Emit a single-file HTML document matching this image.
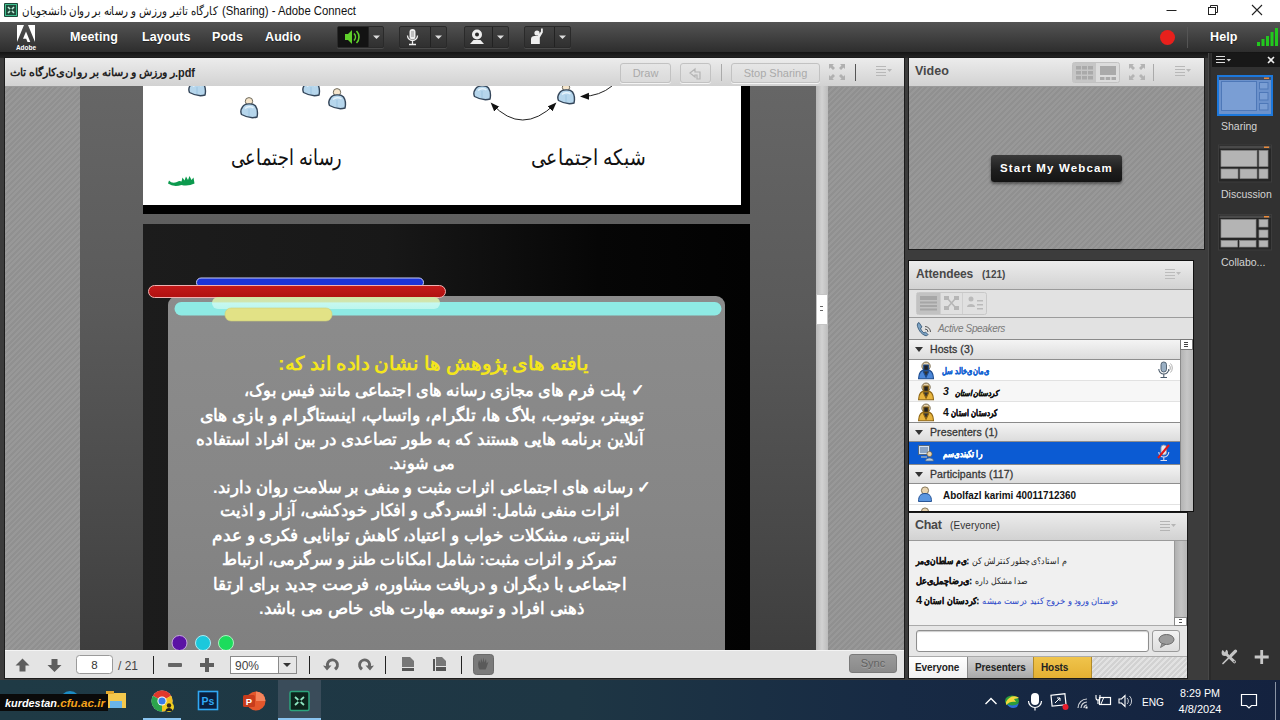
<!DOCTYPE html>
<html><head><meta charset="utf-8"><title>Adobe Connect</title>
<style>
*{box-sizing:border-box;margin:0;padding:0}
html,body{width:1280px;height:720px;overflow:hidden;background:#2f2f2f;font-family:"Liberation Sans",sans-serif;font-size:12px;color:#222}
.a{position:absolute}
.nw{white-space:nowrap;overflow:hidden}
.hatch{background:#949494 repeating-linear-gradient(135deg,#909090 0,#909090 2px,#989898 2px,#989898 4px)}
.phead{background:linear-gradient(#ececec,#d2d2d2);border-bottom:1px solid #9a9a9a}
/* title bar */
#title{left:0;top:0;width:1280px;height:22px;background:#fff}
/* menu bar */
#menu{left:0;top:22px;width:1280px;height:31px;background:linear-gradient(#545454,#404040 50%,#2c2c2c)}
#menu2{left:0;top:52px;width:1280px;height:6px;background:linear-gradient(#141414,#262626)}
.mi{color:#fff;font-weight:bold;font-size:12.500px;top:30px;letter-spacing:.1px;text-shadow:0 1px 1px #222}
.tb{top:26px;height:22px;background:linear-gradient(#424242,#303030);border:1px solid #2a2a2a;border-radius:2px;box-shadow:0 1px 0 #4a4a4a}
/* app bg */
#app{left:0;top:58px;width:1280px;height:622px;background:#3c3c3c}
/* taskbar */
#task{left:0;top:680px;width:1280px;height:40px;background:linear-gradient(90deg,#1f3a45 0,#1e3644 45%,#172a44 70%,#14223f 100%)}

.hb{top:63px;height:20px;border:1px solid #c2c2c2;border-radius:3px;background:linear-gradient(#e6e6e6,#dadada);color:#aaa;font-size:11px;line-height:18px;text-align:center;box-shadow:0 1px 0 #f4f4f4}

.gh{left:909px;width:271px;height:21px;background:linear-gradient(#f4f4f4,#dcdcdc);border-top:1px solid #8a8a8a;border-bottom:1px solid #8e8e8e;font-size:10.500px;color:#333;line-height:18px;padding-left:21px;letter-spacing:.1px;-webkit-text-stroke:.3px #3a3a3a}
.gh:before{content:"";position:absolute;left:6px;top:7px;border:4px solid transparent;border-top:5px solid #333;border-bottom:0}
.row{left:909px;width:271px;height:21px;background:#fff;border-bottom:1px solid #e2e2e2}
.rt{left:943px;height:20px;line-height:20px;font-size:10px;font-weight:bold;color:#111}

.ct{top:657px;height:21px;font-size:10px;font-weight:bold;color:#222;line-height:21px;letter-spacing:-.1px}
.sl{left:1221px;width:59px;color:#d4d4d4;font-size:10.500px;letter-spacing:0;white-space:nowrap}
</style></head><body>

<!-- TITLE BAR -->
<div id="title" class="a">
 <svg class="a" style="left:4px;top:3px" width="14" height="14" viewBox="0 0 14 14"><rect width="14" height="14" rx="1" fill="#1f4a3a"/><rect x="1.5" y="1.5" width="11" height="11" fill="none" stroke="#3fbf8f" stroke-width="1"/><path d="M4 4l6 6M10 4l-6 6" stroke="#bff0dc" stroke-width="1.6"/><circle cx="7" cy="7" r="1.6" fill="#1f4a3a"/></svg>
 <svg class="a" style="left:0;top:0" width="400" height="22" viewBox="0 0 400 22" font-family="Liberation Sans, sans-serif" fill="#111">
  <text x="218" y="15" direction="rtl" textLength="196" lengthAdjust="spacingAndGlyphs" font-size="11.500">کارگاه تاثیر ورزش و رسانه بر روان دانشجویان</text>
  <text x="222" y="15" textLength="134" lengthAdjust="spacingAndGlyphs" font-size="12">(Sharing) - Adobe Connect</text>
 </svg>
 <svg class="a" style="left:1160px;top:0" width="120" height="22" viewBox="0 0 120 22"><path d="M6.5 10.5h10" stroke="#222" stroke-width="1"/><rect x="48.5" y="7.5" width="7" height="7" fill="#fff" stroke="#222"/><path d="M50.5 7.5v-2h7v7h-2" fill="none" stroke="#222"/><path d="M92 5l10 10M102 5l-10 10" stroke="#222" stroke-width="1.1"/></svg>
</div>
<!-- MENU BAR -->
<div id="menu" class="a"></div><div id="menu2" class="a"></div>
<svg class="a" style="left:14px;top:24px" width="24" height="27" viewBox="0 0 24 27"><path d="M3 1h7L3 18zM21 1h-7l7 17zM12 7.5l4.3 10.5h-2.8l-1.3-3.3H9z" fill="#fff"/><text x="12" y="25.5" font-family="Liberation Sans,sans-serif" font-size="6.5" font-weight="bold" fill="#fff" text-anchor="middle">Adobe</text></svg>
<div class="a mi" style="left:70px">Meeting</div>
<div class="a mi" style="left:142px">Layouts</div>
<div class="a mi" style="left:212px">Pods</div>
<div class="a mi" style="left:265px">Audio</div>
<!-- toolbar buttons -->
<div class="a tb" style="left:337px;width:47px"></div><div class="a" style="left:338px;top:27px;width:30px;height:20px;background:#131313"></div>
<div class="a tb" style="left:399px;width:48px"></div>
<div class="a tb" style="left:464px;width:45px"></div>
<div class="a tb" style="left:524px;width:47px"></div>
<svg class="a" style="left:337px;top:26px" width="240" height="22" viewBox="0 0 240 22">
 <g stroke="#222" stroke-width="1"><path d="M31.500 1v20M93.500 1v20M155.500 1v20M217.500 1v20"/></g>
 <!-- speaker green -->
 <path d="M8 8h3l4-4v14l-4-4H8z" fill="#5fd02a"/><path d="M17 7.5a5 5 0 010 7M19.500 5a8.500 8.500 0 010 12" fill="none" stroke="#5fd02a" stroke-width="1.6"/>
 <path d="M36 9.500h7l-3.500 3.500z" fill="#ddd"/>
 <!-- mic -->
 <rect x="72.500" y="3" width="6" height="10.500" rx="3" fill="#eee"/><path d="M74 6h3M74 8h3M74 10h3" stroke="#777" stroke-width=".8"/><path d="M70.500 9.500a5 5 0 0010 0M75.500 15v3M72 18.500h7" fill="none" stroke="#eee" stroke-width="1.300"/>
 <path d="M98 9.500h7l-3.500 3.500z" fill="#ddd"/>
 <!-- webcam -->
 <circle cx="140" cy="8.500" r="5" fill="#eee"/><circle cx="140" cy="8.500" r="2" fill="#2a2a2a"/><path d="M133 18l3.500-4h7l3.500 4z" fill="#eee"/>
 <path d="M160 9.500h7l-3.500 3.500z" fill="#ddd"/>
 <!-- raise hand -->
 <circle cx="200" cy="7" r="2.600" fill="#eee"/><path d="M194 18v-5c0-2 1.500-3 3.500-3h3l3.500-4.500v-3h1.800v4l-3 5V18z" fill="#eee"/>
 <path d="M222 9.500h7l-3.500 3.500z" fill="#ddd"/>
</svg>
<!-- right side of menu -->
<div class="a" style="left:1160px;top:30px;width:15px;height:15px;border-radius:8px;background:#e8201c"></div>
<div class="a" style="left:1187px;top:27px;width:1px;height:21px;background:#555"></div>
<div class="a mi" style="left:1210px">Help</div>
<svg class="a" style="left:1256px;top:28px" width="22" height="18" viewBox="0 0 22 18"><path d="M1 14h3v4H1zM5.500 11h3v7h-3zM10 8h3v10h-3zM14.500 4h3v14h-3zM19 0h3v18h-3z" fill="#22c81e"/></svg>
<div id="app" class="a"></div>

<!-- SHARE POD -->
<div class="a" style="left:4px;top:57px;width:901px;height:622px;background:#1c1c1c"></div>
<div class="a hatch" style="left:5px;top:86px;width:899px;height:564px"></div>
<div class="a phead" style="left:5px;top:58px;width:899px;height:29px"></div>
<svg class="a" style="left:5px;top:58px" width="300" height="28" viewBox="5 58 300 28" font-family="Liberation Sans, sans-serif" font-weight="bold" fill="#222">
 <text x="175" y="76" direction="rtl" textLength="165" lengthAdjust="spacingAndGlyphs" font-size="10.500">ر ورزش و رسانه بر روان‌ی‌کارگاه تاث</text>
 <text x="175" y="76.500" textLength="20" lengthAdjust="spacingAndGlyphs" font-size="12">.pdf</text>
</svg>
<div class="a hb" style="left:620px;width:51px">Draw</div>
<div class="a hb" style="left:680px;width:31px"><svg width="16" height="14" viewBox="0 0 16 14" style="margin-top:3px"><path d="M2 6l5-4v3h5v7H9V8H7v2z" fill="none" stroke="#b4b4b4" stroke-width="1.2"/></svg></div>
<div class="a" style="left:721px;top:64px;width:1px;height:17px;background:#aaa"></div>
<div class="a hb" style="left:731px;width:89px">Stop Sharing</div>
<svg class="a" style="left:829px;top:64px" width="16" height="16" viewBox="0 0 16 16"><path d="M0 0h5L3.500 1.500 6 4 4 6 1.500 3.500 0 5zM16 0v5l-1.500-1.500L12 6l-2-2 2.500-2.500L11 0zM0 16v-5l1.500 1.500L4 10l2 2-2.500 2.500L5 16zM16 16h-5l1.500-1.500L10 12l2-2 2.500 2.500L16 11z" fill="#b0b0b0"/></svg>
<div class="a" style="left:855px;top:64px;width:1px;height:17px;background:#555"></div>
<svg class="a" style="left:876px;top:66px" width="16" height="10" viewBox="0 0 16 10"><path d="M0 .5h10M0 3.500h10M0 6.500h10M0 9.500h10" stroke="#b8b8b8"/><path d="M11 3h5l-2.500 3z" fill="#b8b8b8"/></svg>
<!-- doc area -->
<div class="a" style="left:80px;top:86px;width:736px;height:564px;background:linear-gradient(#666,#5a5a5a 40%,#484848 80%,#3e3e3e)"></div>
<div class="a" style="left:816px;top:86px;width:12px;height:564px;background:linear-gradient(90deg,#b8b8b8,#d2d2d2 50%,#bcbcbc)"></div>
<div class="a" style="left:816px;top:294px;width:12px;height:31px;background:#fff;border:1px solid #c4c4c4"></div>
<div class="a" style="left:820px;top:306px;width:3px;height:5px;border-top:1px solid #666;border-bottom:1px solid #666"></div>
<!-- slide 1 -->
<div class="a" style="left:143px;top:86px;width:607px;height:128px;background:#000"></div>
<div class="a" style="left:143px;top:86px;width:598px;height:119px;background:#fff"></div>
<!-- slide 2 -->
<div class="a" style="left:143px;top:224px;width:607px;height:426px;background:linear-gradient(90deg,#1c1c1c,#181818 40%,#060606 75%,#020202)"></div>
<div class="a" style="left:168px;top:296px;width:557px;height:354px;background:linear-gradient(#8c8c8c,#868686 60%,#808080);border-radius:9px 9px 0 0"></div>

<!-- SLIDE CONTENT -->
<svg class="a" style="left:0;top:86px" width="905" height="564" viewBox="0 86 905 564" font-family="Liberation Sans, sans-serif">
<defs>
 <g id="pp"><circle cx="9" cy="4.300" r="3.700" fill="#f6e6cc" stroke="#6e6a5c" stroke-width="1"/><path d="M2.500 10C4.500 6.300 13 5.700 15.500 9c2 3 2.400 7 1.500 11-5 1.500-11 0-15.500-2.500C.4 15 1 12 2.500 10z" fill="#b6d6ec" stroke="#34465a" stroke-width="1.400"/><path d="M5 11.500c2-2 6-2.500 8.500-.5" stroke="#e6f3fb" stroke-width="1.600" fill="none"/><path d="M9 12v7" stroke="#9cc4e0" stroke-width="1"/></g>
 <linearGradient id="pg" x1="0" y1="0" x2="0" y2="1"><stop offset="0" stop-color="#d2e2a4"/><stop offset=".4" stop-color="#d0e6b0"/><stop offset=".5" stop-color="#c6f8f0"/><stop offset="1" stop-color="#bcf6ee"/></linearGradient>
 <linearGradient id="rg" x1="0" y1="0" x2="0" y2="1"><stop offset="0" stop-color="#c41a1a"/><stop offset="1" stop-color="#b01010"/></linearGradient>
 <marker id="ah" markerWidth="10" markerHeight="8" refX="7" refY="3.500" orient="auto-start-reverse"><path d="M0 0l9 3.500-9 3.500z" fill="#111"/></marker>
</defs>
<!-- slide 1 -->
<use href="#pp" x="188" y="75"/><use href="#pp" x="240" y="97"/><use href="#pp" x="302" y="75"/><use href="#pp" x="328" y="88"/>
<use href="#pp" x="473" y="79"/><use href="#pp" x="557" y="83"/>
<path d="M492 104Q522 136 555 104" fill="none" stroke="#222" stroke-width="1" marker-start="url(#ah)" marker-end="url(#ah)"/>
<path d="M612 86Q600 96 582 96.500" fill="none" stroke="#222" stroke-width="1" marker-end="url(#ah)"/>
<g font-size="22" fill="#111">
<text x="342" y="165" direction="rtl" textLength="111" lengthAdjust="spacingAndGlyphs">رسانه اجتماعی</text>
<text x="645" y="165" direction="rtl" textLength="114" lengthAdjust="spacingAndGlyphs">شبکه اجتماعی</text>
</g>
<path d="M169 180.500q3 3.500 8 1.500 2.500-1.500 4.500-.5l1-4 2 3 1.500-4 2 3.500 1.500-4 2 4 2-2.500 1 6q-6 3-13 1.500-8 2.500-13.500-1.500z" fill="#0c9a4e"/>
<!-- slide 2 bars -->
<rect x="196.500" y="278" width="227" height="9" rx="4.500" fill="#1c34d8" stroke="#c8ccf4" stroke-width="1"/>
<rect x="148.500" y="285.500" width="297" height="12" rx="6" fill="url(#rg)" stroke="#f0b0b0" stroke-width="1"/>
<rect x="174.500" y="302" width="547" height="13.500" rx="6.700" fill="#8eeae4"/>
<rect x="212" y="297" width="228" height="12" rx="6" fill="url(#pg)"/>
<rect x="225" y="308" width="107" height="13" rx="6" fill="#e2e286" stroke="#d0d078" stroke-width=".6"/>
<!-- slide 2 text -->
<text x="588" y="370" direction="rtl" textLength="310" lengthAdjust="spacingAndGlyphs" font-size="19" font-weight="bold" fill="#f4e61c">یافته های پژوهش ها نشان داده اند که:</text>
<g font-size="17" font-weight="bold" fill="#fff">
<text x="644" y="396" direction="rtl" textLength="400" lengthAdjust="spacingAndGlyphs">✓  پلت فرم های مجازی رسانه های اجتماعی مانند فیس بوک،</text>
<text x="644" y="421" direction="rtl" textLength="444" lengthAdjust="spacingAndGlyphs">توییتر، یوتیوب، بلاگ ها، تلگرام، واتساپ، اینستاگرام و بازی های</text>
<text x="644" y="445" direction="rtl" textLength="448" lengthAdjust="spacingAndGlyphs">آنلاین برنامه هایی هستند که به طور تصاعدی در بین افراد استفاده</text>
<text x="455" y="469" direction="rtl" textLength="66" lengthAdjust="spacingAndGlyphs">می شوند.</text>
<text x="651" y="493" direction="rtl" textLength="438" lengthAdjust="spacingAndGlyphs">✓ رسانه های اجتماعی اثرات مثبت و منفی بر سلامت روان دارند.</text>
<text x="620" y="516" direction="rtl" textLength="400" lengthAdjust="spacingAndGlyphs">اثرات منفی شامل:  افسردگی و افکار خودکشی، آزار و اذیت</text>
<text x="630" y="541" direction="rtl" textLength="418" lengthAdjust="spacingAndGlyphs">اینترنتی، مشکلات خواب و اعتیاد، کاهش توانایی فکری و عدم</text>
<text x="617" y="565" direction="rtl" textLength="395" lengthAdjust="spacingAndGlyphs">تمرکز و اثرات مثبت: شامل امکانات طنز و سرگرمی، ارتباط</text>
<text x="627" y="590" direction="rtl" textLength="414" lengthAdjust="spacingAndGlyphs">اجتماعی با دیگران و دریافت مشاوره، فرصت جدید برای ارتقا</text>
<text x="585" y="614" direction="rtl" textLength="326" lengthAdjust="spacingAndGlyphs">ذهنی افراد و توسعه مهارت های خاص می باشد.</text>
</g>
<circle cx="179.500" cy="643" r="7.500" fill="#5a12a4" stroke="#c8a8e0" stroke-width="1"/>
<circle cx="203" cy="643" r="7.500" fill="#1cc8dc" stroke="#a8ecf4" stroke-width="1"/>
<circle cx="226" cy="643" r="7.500" fill="#1cdc5c" stroke="#a8f4c0" stroke-width="1"/>
</svg>
<!-- bottom toolbar -->
<div class="a" style="left:5px;top:650px;width:899px;height:28px;background:#e4e4e4;border-top:1px solid #f4f4f4"></div>

<!-- bottom toolbar items -->
<svg class="a" style="left:5px;top:651px" width="899" height="27" viewBox="5 651 899 27" font-family="Liberation Sans, sans-serif">
 <path d="M22.500 658.500l7 7h-4v6h-6v-6h-4z" fill="#5e5e5e"/>
 <path d="M54.500 672l7-7h-4v-6h-6v6h-4z" fill="#5e5e5e"/>
 <rect x="76.500" y="655.500" width="36" height="18" rx="3" fill="#fff" stroke="#9a9a9a"/>
 <text x="94.500" y="669" font-size="11.500" text-anchor="middle" fill="#333">8</text>
 <text x="118" y="669.500" font-size="12" fill="#444" textLength="20">/ 21</text>
 <path d="M153.500 656v18M309.500 656v18M385.500 656v18M461.500 656v18" stroke="#222" stroke-width="1"/>
 <rect x="168" y="663" width="14" height="4" rx="1" fill="#666"/>
 <path d="M200 663h5v-5h4v5h5v4h-5v5h-4v-5h-5z" fill="#5e5e5e"/>
 <rect x="230.500" y="656.500" width="66" height="17" fill="#fff" stroke="#8a8a8a"/>
 <rect x="278" y="657" width="18" height="16" fill="#e6e6e6"/><path d="M278.500 657v16" stroke="#8a8a8a"/>
 <path d="M283 663h8l-4 4z" fill="#333"/>
 <text x="235" y="670" font-size="12" fill="#444" textLength="24">90%</text>
 <!-- undo / redo -->
 <path d="M326 666a6.500 6.500 0 1110 4.500l-2-2.500a3.500 3.500 0 10-5-2.500h2.500l-4.500 5-4-5z" fill="#666"/>
 <path d="M371 666a6.500 6.500 0 10-10 4.500l2-2.500a3.500 3.500 0 115-2.500h-2.500l4.500 5 4-5z" fill="#666"/>
 <!-- page icons -->
 <path d="M402 657h8l4 4v6h-12z" fill="#777"/><rect x="402" y="668" width="12" height="3" fill="#555"/>
 <path d="M436 657h6l4 4v5h-10z" fill="#777"/><path d="M433 659h2v12h-2zM436 667h10v4h-10z" fill="#555"/>
 <rect x="473.500" y="654.500" width="20" height="20" rx="3" fill="#7a7a7a" stroke="#6a6a6a"/>
 <path d="M478 664l1-4 1.500 3 .5-5 1.500 4.500 1-5 1 5 1.500-4 .5 5 2-2-2 6-1 2h-6l-1-2z" fill="#5a5a5a"/>
</svg>
<div class="a" style="left:849px;top:654px;width:48px;height:19px;background:linear-gradient(#9a9a9a,#8a8a8a);border:1px solid #7a7a7a;border-radius:3px;color:#626262;font-size:11px;line-height:17px;text-align:center;text-shadow:0 1px 0 #a4a4a4">Sync</div>

<!-- VIDEO POD -->
<div class="a" style="left:908px;top:57px;width:297px;height:193px;background:#1c1c1c"></div>
<div class="a hatch" style="left:909px;top:86px;width:295px;height:163px"></div>
<div class="a phead" style="left:909px;top:58px;width:295px;height:29px"></div>
<div id="t_vid" class="a" style="left:915px;top:64px;font-size:12.500px;font-weight:bold;color:#484848;letter-spacing:0">Video</div>
<svg class="a" style="left:1072px;top:62px" width="125" height="22" viewBox="1072 62 125 22">
 <rect x="1072.500" y="62.500" width="47" height="20" rx="2" fill="#dcdcdc" stroke="#c2c2c2"/>
 <rect x="1073" y="63" width="23" height="19" fill="#c6c6c6"/>
 <g fill="#aaa"><rect x="1076" y="66" width="5" height="3.500"/><rect x="1082" y="66" width="5" height="3.500"/><rect x="1088" y="66" width="5" height="3.500"/><rect x="1076" y="71" width="5" height="3.500"/><rect x="1082" y="71" width="5" height="3.500"/><rect x="1088" y="71" width="5" height="3.500"/><rect x="1076" y="76" width="5" height="3.500"/><rect x="1082" y="76" width="5" height="3.500"/><rect x="1088" y="76" width="5" height="3.500"/>
 <rect x="1100" y="66" width="16" height="9"/><rect x="1100" y="77" width="4.500" height="3"/><rect x="1105.700" y="77" width="4.500" height="3"/><rect x="1111.500" y="77" width="4.500" height="3"/></g>
 <g transform="translate(1129,64)"><path d="M0 0h5L3.500 1.500 6 4 4 6 1.500 3.500 0 5zM16 0v5l-1.500-1.500L12 6l-2-2 2.500-2.500L11 0zM0 16v-5l1.500 1.500L4 10l2 2-2.500 2.500L5 16zM16 16h-5l1.500-1.500L10 12l2-2 2.500 2.500L16 11z" fill="#b4b4b4"/></g>
 <path d="M1153.500 64v17" stroke="#aaa"/>
 <g transform="translate(1175,66)"><path d="M0 .5h10M0 3.500h10M0 6.500h10M0 9.500h10" stroke="#b8b8b8"/><path d="M11 3h5l-2.500 3z" fill="#b8b8b8"/></g>
</svg>
<div class="a" style="left:991px;top:155px;width:131px;height:27px;border-radius:3px;background:linear-gradient(#3a3a3a,#1e1e1e 55%,#141414);box-shadow:0 2px 3px rgba(0,0,0,.45);color:#fff;font-size:11.500px;font-weight:bold;line-height:26px;text-align:center;letter-spacing:1.150px">Start My Webcam</div>

<!-- ATTENDEES POD -->
<div class="a" style="left:908px;top:260px;width:286px;height:252px;background:#111"></div>
<div class="a phead" style="left:909px;top:261px;width:284px;height:29px"></div>
<div id="t_att" class="a" style="left:916px;top:267px;font-size:12px;font-weight:bold;color:#484848;letter-spacing:-.1px">Attendees</div>
<div id="t_121" class="a" style="left:982px;top:269px;font-size:10px;font-weight:bold;color:#484848">(121)</div>
<svg class="a" style="left:1165px;top:269px" width="16" height="10" viewBox="0 0 16 10"><path d="M0 .5h10M0 3.500h10M0 6.500h10M0 9.500h10" stroke="#bcbcbc"/><path d="M11 3h5l-2.500 3z" fill="#bcbcbc"/></svg>
<div class="a" style="left:909px;top:290px;width:284px;height:28px;background:#e2e2e2;border-bottom:1px solid #9c9c9c"></div>
<svg class="a" style="left:916px;top:292px" width="72" height="23" viewBox="916 292 72 23">
 <rect x="916.500" y="292.500" width="70" height="22" rx="2" fill="#e0e0e0" stroke="#c8c8c8"/>
 <rect x="917" y="293" width="23" height="21" fill="#c2c2c2"/><path d="M940.500 293v21M962.500 293v21" stroke="#cfcfcf"/>
 <g fill="#a6a6a6"><rect x="920" y="296" width="17" height="4"/><rect x="920" y="301.500" width="17" height="2"/><rect x="920" y="305" width="17" height="2"/><rect x="920" y="308.500" width="17" height="2"/></g>
 <g fill="#b6b6b6"><rect x="944" y="296" width="5" height="4"/><rect x="954" y="296" width="5" height="4"/><rect x="944" y="306" width="5" height="4"/><rect x="954" y="306" width="5" height="4"/><path d="M948 299l7 8M955 299l-7 8" stroke="#b6b6b6" stroke-width="1.500"/></g>
 <g fill="#bababa"><circle cx="971" cy="299" r="2.500"/><path d="M967 307c0-4 8-4 8 0z"/><rect x="977" y="300" width="6" height="1.500"/><rect x="977" y="304" width="6" height="1.500"/><rect x="977" y="308" width="6" height="1.500"/></g>
</svg>
<div class="a" style="left:909px;top:318px;width:284px;height:21px;background:#e2e2e2"></div>
<svg class="a" style="left:916px;top:321px" width="17" height="16" viewBox="0 0 17 16"><path d="M3 1.500c-1.500.5-2 2-1.500 4C3 10 5.500 13 9 14.500c1.500.5 2.500 0 3-1l-2.500-2.500-1.500 1C6.500 11 5 9 4.500 7l1.500-1z" fill="#7aa2c4" stroke="#3a5a78" stroke-width=".9"/><path d="M9 8a3 3 0 013 3M9 5.500a5.500 5.500 0 015.500 5.500" fill="none" stroke="#555" stroke-width="1"/></svg>
<div id="t_as" class="a" style="left:938px;top:323px;font-size:10px;font-style:italic;color:#7a7a7a;letter-spacing:-.35px">Active Speakers</div>
<div class="a gh" style="top:339px">Hosts (3)</div>
<div class="a row" style="top:360px"></div>
<div class="a row" style="top:381px;background:#f7f7f7"></div>
<div class="a row" style="top:402px;height:20px;border-bottom:0"></div>
<div class="a gh" style="top:422px;height:20px">Presenters (1)</div>
<div class="a row" style="top:442px;height:22px;background:#0b5bd3;border-bottom:0"></div>
<div class="a gh" style="top:464px;height:20px">Participants (117)</div>
<div class="a row" style="top:484px"></div>
<div class="a row" style="top:505px;height:6px;border-bottom:0"></div>
<svg class="a" style="left:909px;top:360px" width="271px" height="151" viewBox="909 360 271 151" font-family="Liberation Sans, sans-serif" font-weight="bold">
 <defs>
  <g id="av"><circle cx="7" cy="4.500" r="3.600" fill="#e8d4b0" stroke="#6a5a3a" stroke-width=".8"/><path d="M.5 15.500C.5 10 2.500 7.500 7 7.500s6.500 2.500 6.500 8z" stroke-width=".9"/><path d="M5 3.500h4v4.500H5z" fill="#222"/><path d="M4.500 9l2.500 5 2.500-5" fill="#333"/></g>
 </defs>
 <use href="#av" transform="translate(918,361) scale(1.15)" fill="#4a86d8" stroke="#1c4a8c"/>
 <use href="#av" transform="translate(918,382) scale(1.15)" fill="#e8b43c" stroke="#8c6414"/>
 <use href="#av" transform="translate(918,403) scale(1.15)" fill="#e8b43c" stroke="#8c6414"/>
 <text x="989" y="374" direction="rtl" textLength="47" lengthAdjust="spacingAndGlyphs" font-size="8.500" fill="#1464d2" stroke="#1464d2" stroke-width=".4">ی‌مان‌ی‌خالد سل</text>
 <text x="943" y="395" font-size="10.500" font-style="italic" fill="#111">3</text>
 <text x="998" y="396" direction="rtl" textLength="43" lengthAdjust="spacingAndGlyphs" font-size="8" font-style="italic" fill="#111" stroke="#111" stroke-width=".35">کردستان استان</text>
 <text x="943" y="416" font-size="10.500" fill="#111">4</text>
 <text x="997" y="416" direction="rtl" textLength="46" lengthAdjust="spacingAndGlyphs" font-size="8.500" fill="#111" stroke="#111" stroke-width=".4">کردستان استان</text>
 <!-- speaking mic -->
 <g transform="translate(1158,362)"><rect x="3" y="0" width="5.500" height="10" rx="2.700" fill="#9ab0c4" stroke="#4a5a6a" stroke-width=".9"/><path d="M.8 7a5 5 0 0010 0M5.800 12v3M2.500 15.500h6.500" fill="none" stroke="#4a5a6a" stroke-width="1.100"/><path d="M11 3a4 4 0 010 6M12.500 1.500a6.500 6.500 0 010 9" fill="none" stroke="#9a9a9a" stroke-width=".8"/></g>
 <!-- presenter row -->
 <g transform="translate(918,445)"><rect x=".5" y=".5" width="11" height="9" fill="#d8e4f0" stroke="#56687c"/><rect x="2" y="2" width="8" height="6" fill="#8aa4c4"/><path d="M3 12h6" stroke="#9ab" stroke-width="1.500"/><circle cx="11.500" cy="9" r="2.600" fill="#e8d4b0" stroke="#6a5a3a" stroke-width=".7"/><path d="M7.500 16c0-4 8-4 8 0z" fill="#b8cce0" stroke="#56687c" stroke-width=".7"/></g>
 <text x="982" y="456.500" direction="rtl" textLength="39" lengthAdjust="spacingAndGlyphs" font-size="8.500" fill="#fff" stroke="#fff" stroke-width=".4">را تکبندی‌سم</text>
 <g transform="translate(1158,445)"><rect x="3" y="0" width="5.500" height="10" rx="2.700" fill="#e8e8f0" stroke="#8a94a8" stroke-width=".9"/><path d="M.8 7a5 5 0 0010 0M5.800 12v3M2.500 15.500h6.500" fill="none" stroke="#dde" stroke-width="1.100"/><path d="M0 13L11 0" stroke="#e01818" stroke-width="2"/></g>
 <!-- participant -->
 <g transform="translate(918,486)"><circle cx="7" cy="4.500" r="3.600" fill="#e8d4b0" stroke="#6a5a3a" stroke-width=".8"/><path d="M.5 15.500C.5 10 2.500 7.500 7 7.500s6.500 2.500 6.500 8z" fill="#5a96e0" stroke="#1c4a8c" stroke-width=".9"/></g>
 <text x="943" y="498.500" font-size="10.500" fill="#111" textLength="133" lengthAdjust="spacingAndGlyphs">Abolfazl karimi 40011712360</text>
 <g transform="translate(918,507)"><circle cx="7" cy="4.500" r="3.600" fill="#e8d4b0" stroke="#6a5a3a" stroke-width=".8"/></g>
</svg>
<div class="a" style="left:1180px;top:339px;width:13px;height:172px;background:linear-gradient(90deg,#b4b4b4,#c6c6c6 50%,#b8b8b8);border-left:1px solid #8a8a8a"></div>
<div class="a" style="left:1180px;top:339px;width:13px;height:11px;background:#fff;border:1px solid #777"></div>
<div class="a" style="left:1184px;top:342px;width:4px;height:5px;border-top:1px solid #444;border-bottom:1px solid #444"></div>
<div class="a" style="left:1184px;top:344px;width:4px;height:1px;background:#444"></div>

<!-- CHAT POD -->
<div class="a" style="left:908px;top:512px;width:280px;height:167px;background:#1a1a1a"></div>
<div class="a" style="left:909px;top:513px;width:278px;height:165px;background:#e6e6e6"></div>
<div class="a phead" style="left:909px;top:513px;width:278px;height:28px"></div>
<div id="t_chat" class="a" style="left:915px;top:518px;font-size:12.500px;font-weight:bold;color:#484848;letter-spacing:-.3px">Chat</div>
<div id="t_ev" class="a" style="left:950px;top:520px;font-size:10px;color:#333;letter-spacing:.1px">(Everyone)</div>
<svg class="a" style="left:1160px;top:521px" width="16" height="10" viewBox="0 0 16 10"><path d="M0 .5h10M0 3.500h10M0 6.500h10M0 9.500h10" stroke="#b4b4b4"/><path d="M11 3h5l-2.500 3z" fill="#b4b4b4"/></svg>
<div class="a" style="left:909px;top:541px;width:265px;height:85px;background:#f0f0f0;border-bottom:1px solid #aaa"></div>
<div class="a" style="left:1174px;top:541px;width:13px;height:85px;background:linear-gradient(90deg,#b0b0b0,#c4c4c4 50%,#b6b6b6);border-left:1px solid #999"></div>
<div class="a" style="left:1174px;top:617px;width:13px;height:9px;background:#fff;border:1px solid #888"></div>
<div class="a" style="left:1179px;top:619px;width:3px;height:4px;border-top:1px solid #555;border-bottom:1px solid #555"></div>
<svg class="a" style="left:909px;top:541px" width="265" height="85" viewBox="909 541 265 85" font-family="Liberation Sans, sans-serif" font-size="9">
 <text x="969" y="563.500" direction="rtl" textLength="53" lengthAdjust="spacingAndGlyphs" font-weight="bold" fill="#111" stroke="#111" stroke-width=".3">:ی‌م سلطان‌ی‌مر</text>
 <text x="1067" y="563.500" direction="rtl" textLength="95" lengthAdjust="spacingAndGlyphs" fill="#222">م استاد؟ی‌چطور کنترلش کن</text>
 <text x="972" y="583.500" direction="rtl" textLength="56" lengthAdjust="spacingAndGlyphs" font-weight="bold" fill="#111" stroke="#111" stroke-width=".3">:ی‌رضاچمل‌ی‌عل</text>
 <text x="1028" y="583.500" direction="rtl" textLength="53" lengthAdjust="spacingAndGlyphs" fill="#222">صدا مشکل داره</text>
 <text x="916" y="604" font-weight="bold" font-size="11" fill="#111">4</text>
 <text x="979" y="604" direction="rtl" textLength="55" lengthAdjust="spacingAndGlyphs" font-weight="bold" fill="#111" stroke="#111" stroke-width=".3">:کردستان استان</text>
 <text x="1118" y="604" direction="rtl" textLength="136" lengthAdjust="spacingAndGlyphs" fill="#2a46c8">دوستان ورود و خروج کنید درست میشه</text>
</svg>
<div class="a" style="left:916px;top:630px;width:233px;height:22px;background:#fff;border:1px solid #8e8e8e;border-radius:3px;box-shadow:inset 0 1px 1px #ccc"></div>
<div class="a" style="left:1152px;top:630px;width:28px;height:22px;background:linear-gradient(#f2f2f2,#dedede);border:1px solid #9a9a9a;border-radius:3px"></div>
<svg class="a" style="left:1158px;top:634px" width="17" height="14" viewBox="0 0 17 14"><ellipse cx="8.500" cy="5.500" rx="7.500" ry="5" fill="#9c9c9c" stroke="#6a6a6a"/><path d="M4 9.500l-1.500 4 5-3z" fill="#9c9c9c" stroke="#6a6a6a" stroke-width=".8"/></svg>
<div class="a" style="left:909px;top:656px;width:278px;height:22px;border-top:1px solid #aaa;background:#d8d8d8 repeating-linear-gradient(135deg,#d2d2d2 0,#d2d2d2 2px,#e2e2e2 2px,#e2e2e2 4px)"></div>
<div class="a ct" style="left:909px;width:58px;background:linear-gradient(#fff,#f0f0f0);padding-left:6px">Everyone</div>
<div class="a ct" style="left:967px;width:66px;background:linear-gradient(#d4d4d4,#a8a8a8);padding-left:7px;border-left:1px solid #888">Presenters</div>
<div class="a ct" style="left:1033px;width:59px;background:linear-gradient(#f0c44c,#e4b032);padding-left:7px;border-left:1px solid #b08a2a;border-right:1px solid #b08a2a">Hosts</div>

<!-- RIGHT SIDEBAR -->
<div class="a" style="left:1209px;top:53px;width:71px;height:627px;background:#313131;border-left:2px solid #2a2a2a;box-shadow:-1px 0 0 #474747"></div>
<div class="a" style="left:1212px;top:53px;width:68px;height:14px;background:#181818"></div>
<svg class="a" style="left:1216px;top:56px" width="16" height="9" viewBox="0 0 16 9"><path d="M0 .5h9M0 3.500h9M0 6.500h9" stroke="#ddd"/><path d="M10.500 3h4.500l-2.200 2.500z" fill="#ddd"/></svg>
<svg class="a" style="left:1267px;top:56px" width="8" height="8" viewBox="0 0 8 8"><path d="M1 1l6 6M7 1L1 7" stroke="#eee" stroke-width="1.600"/></svg>
<svg class="a" style="left:1214px;top:72px" width="62" height="205" viewBox="1214 72 62 205">
 <rect x="1218" y="76" width="54" height="39" fill="#6c92cc" stroke="#1c78dc" stroke-width="2"/>
 <rect x="1219" y="77" width="52" height="3" fill="#3c4c68"/><rect x="1264" y="77.500" width="5" height="1.500" fill="#e88a3c"/>
 <rect x="1221.500" y="81.500" width="35" height="29" fill="#7a9ed4" stroke="#4e78b8"/>
 <g fill="#7a9ed4" stroke="#4e78b8"><rect x="1259.500" y="82.500" width="8.500" height="6.500"/><rect x="1259.500" y="92.500" width="8.500" height="7.500"/><rect x="1259.500" y="103.500" width="8.500" height="6.500"/></g>
 <rect x="1218.500" y="145" width="53" height="37" fill="#262626" stroke="#3c3c3c" stroke-width="1"/>
 <rect x="1219.500" y="146" width="51" height="2.500" fill="#4a4a4a"/><rect x="1264" y="146.500" width="5" height="1.500" fill="#e88a3c"/>
 <g fill="#b4b4b4" stroke="#8a8a8a" stroke-width=".7"><rect x="1221" y="150.500" width="36" height="16"/><rect x="1259" y="150.500" width="9" height="16"/><rect x="1221" y="169" width="17" height="9.500"/><rect x="1240" y="169" width="17" height="9.500"/><rect x="1259" y="169" width="9" height="9.500"/></g>
 <rect x="1218.500" y="214.500" width="53" height="35.500" fill="#262626" stroke="#3c3c3c" stroke-width="1"/>
 <rect x="1219.500" y="215.500" width="51" height="2.500" fill="#4a4a4a"/><rect x="1264" y="216" width="5" height="1.500" fill="#e88a3c"/>
 <g fill="#b4b4b4" stroke="#8a8a8a" stroke-width=".7"><rect x="1221" y="219.500" width="35" height="18"/><rect x="1259" y="219.500" width="9" height="7.500"/><rect x="1259" y="230" width="9" height="7.500"/><rect x="1221" y="240.500" width="16.500" height="6.500"/><rect x="1239.500" y="240.500" width="16.500" height="6.500"/><rect x="1259" y="240.500" width="9" height="6.500"/></g>
</svg>
<div class="a sl" style="top:120px">Sharing</div>
<div class="a sl" style="top:188px">Discussion</div>
<div class="a sl" style="top:256px">Collabo...</div>
<svg class="a" style="left:1220px;top:647px" width="52" height="20" viewBox="0 0 52 20"><path d="M15.500 4.200L11 8.700" stroke="#c4c4c4" stroke-width="3.300" stroke-linecap="round"/><path d="M11 8.700L3 16.500" stroke="#c4c4c4" stroke-width="1.700" stroke-linecap="round"/><path d="M5 6L14.500 14.800" stroke="#c4c4c4" stroke-width="3" stroke-linecap="round"/><circle cx="4.800" cy="5.800" r="3.200" fill="#c4c4c4"/><path d="M1 1l4 4.500L6.500 2z" fill="#313131"/><circle cx="14.300" cy="14.600" r=".9" fill="#555"/><path d="M34.700 10h14M41.700 3v14" stroke="#c8c8c8" stroke-width="2.800"/></svg>
<div id="task" class="a"></div>
<!-- TASKBAR ITEMS -->
<div class="a" style="left:278px;top:680px;width:43px;height:40px;background:#3a4c5a"></div>
<div class="a" style="left:278px;top:718px;width:43px;height:2px;background:#8ac4f0"></div>
<div class="a" style="left:143px;top:718px;width:38px;height:2px;background:#8ac4f0"></div>
<svg class="a" style="left:0;top:680px" width="1280" height="40" viewBox="0 680 1280 40" font-family="Liberation Sans, sans-serif">
 <!-- edge icon behind watermark -->
 <circle cx="70" cy="701" r="10" fill="#1c8cc4"/>
 <!-- file explorer -->
 <rect x="106" y="693" width="20" height="15" fill="#f4c84c"/><rect x="106" y="691" width="8" height="3" fill="#e4a82c"/><rect x="110" y="701" width="12" height="7" fill="#6ab4e8"/>
 <!-- watermark -->
 <rect x="0" y="694" width="108" height="17" fill="#0a0a0a"/>
 <text x="5" y="707" font-size="11.500" font-weight="bold" font-style="italic" fill="#fff" textLength="52" lengthAdjust="spacingAndGlyphs">kurdestan</text>
 <text x="57" y="707" font-size="11.500" font-weight="bold" font-style="italic" fill="#f4a41c" textLength="48" lengthAdjust="spacingAndGlyphs">.cfu.ac.ir</text>
 <!-- chrome -->
 <circle cx="162" cy="701" r="10.500" fill="#e8e8e8"/>
 <path d="M162 701L152.900 695.750A10.500 10.500 0 01171.100 695.750z" fill="#e0382c"/>
 <path d="M162 701L171.100 695.750A10.500 10.500 0 01162 711.500z" fill="#f4c020"/>
 <path d="M162 701L162 711.500A10.500 10.500 0 01152.900 695.750z" fill="#2ca44c"/>
 <circle cx="162" cy="701" r="4.600" fill="#fff"/><circle cx="162" cy="701" r="3.600" fill="#3a7ce8"/>
 <circle cx="169" cy="707" r="5" fill="#f0d020"/><circle cx="169" cy="705.500" r="2.200" fill="#3a2a1a"/><path d="M165.500 711c0-4 7-4 7 0z" fill="#222"/>
 <!-- PS -->
 <rect x="198.500" y="691.500" width="19" height="18" fill="#0a1e3c" stroke="#30a8f4" stroke-width="1.600"/>
 <text x="208" y="705" font-size="10.500" font-weight="bold" fill="#30a8f4" text-anchor="middle">Ps</text>
 <!-- PowerPoint -->
 <circle cx="256" cy="701" r="9.500" fill="#e4572c"/><path d="M256 691.500a9.500 9.500 0 019.500 9.500H256z" fill="#f4845c"/>
 <rect x="243" y="695" width="12" height="12" rx="1.500" fill="#c83c1c"/>
 <text x="249" y="705" font-size="9.500" font-weight="bold" fill="#fff" text-anchor="middle">P</text>
 <!-- connect -->
 <rect x="290" y="691.500" width="19" height="19" rx="1.500" fill="#0c241c" stroke="#2ca47c" stroke-width="1.500"/>
 <path d="M295 697l9 8M304 697l-9 8" stroke="#8ce4c0" stroke-width="1.800"/><circle cx="299.500" cy="701" r="1.700" fill="#0c241c"/>
 <!-- tray -->
 <path d="M985.500 704l5.500-5.500 5.500 5.500" fill="none" stroke="#fff" stroke-width="1.400"/>
 <ellipse cx="1012" cy="701" rx="7" ry="5.500" fill="#2c9c3c"/><path d="M1006 702c3-6 9-7 13-4l-5 1 2 3c-4-1-7 0-10 3z" fill="#f4d83c"/><path d="M1007 704c3 2 9 2 12-1l-2 4c-4 2-8 1-10-3z" fill="#2c6cd8"/>
 <rect x="1031" y="693" width="8" height="12" rx="4" fill="#fff"/><path d="M1028.500 701a6.500 6.500 0 0013 0M1035 707.500v3" fill="none" stroke="#fff" stroke-width="1.200"/>
 <rect x="1051.500" y="694.500" width="14" height="11" fill="none" stroke="#fff" stroke-width="1.200" transform="rotate(-6 1058 700)"/><path d="M1055 703l5-5M1057 698h3v3" stroke="#fff" fill="none" stroke-width="1"/><circle cx="1065.500" cy="707" r="3" fill="#e81c2c"/>
 <path d="M1078 708a9 9 0 019-9M1081 708a6 6 0 016-6M1084 708a3 3 0 013-3" fill="none" stroke="#fff" stroke-width="1.200" opacity=".8"/><rect x="1085.500" y="706.500" width="2" height="2" fill="#fff"/>
 <rect x="1099.500" y="697.500" width="11" height="7" fill="none" stroke="#fff" stroke-width="1.200"/><path d="M1101 704l2.500-6" stroke="#fff"/><path d="M1096 695v3a2 2 0 004 0v-3M1098 700v4" stroke="#fff" fill="none" stroke-width="1.100"/>
 <path d="M1119 699h2.500l3.500-3.500v11l-3.500-3.500H1119z" fill="none" stroke="#fff" stroke-width="1.100"/><path d="M1127 698a4 4 0 010 6M1129.500 696a7 7 0 010 10" fill="none" stroke="#fff" stroke-width="1" opacity=".75"/>
 <text x="1142" y="705.500" font-size="11" fill="#fff" textLength="22" lengthAdjust="spacingAndGlyphs">ENG</text>
 <text x="1200" y="696.500" font-size="11" fill="#fff" text-anchor="middle" textLength="40" lengthAdjust="spacingAndGlyphs">8:29 PM</text>
 <text x="1200" y="713" font-size="11" fill="#fff" text-anchor="middle" textLength="43" lengthAdjust="spacingAndGlyphs">4/8/2024</text>
 <path d="M1241.500 694.500h15v11h-5l-2.500 2.500-2.500-2.500h-5z" fill="none" stroke="#fff" stroke-width="1.200"/>
 <path d="M1275.500 682v38" stroke="#8a94a4" stroke-width="1"/>
</svg>

</body></html>
